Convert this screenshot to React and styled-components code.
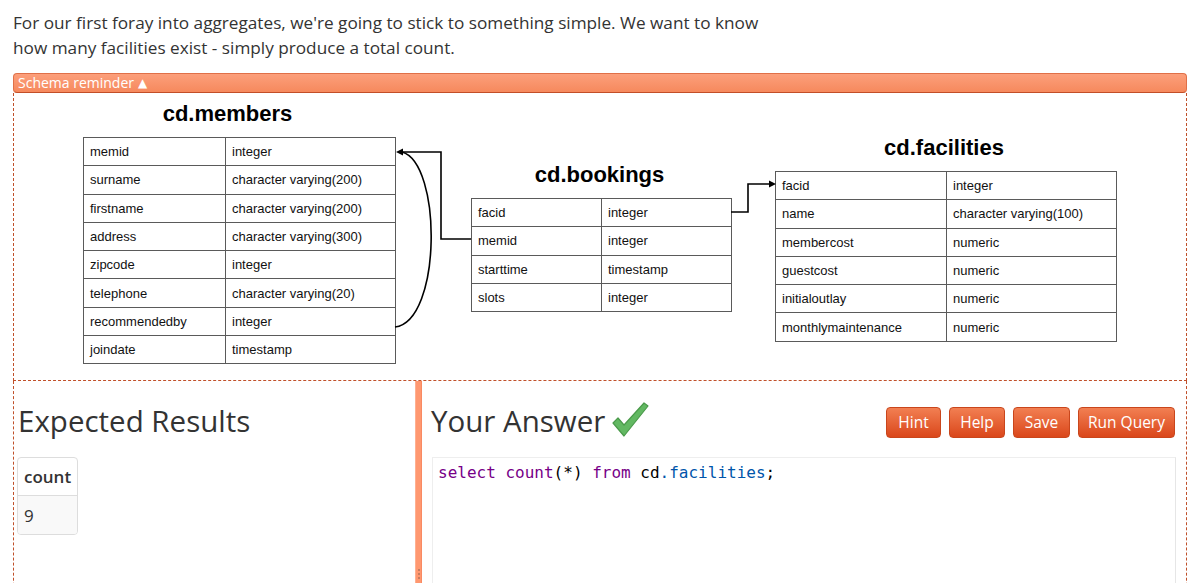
import React from "react";
import styled, { createGlobalStyle } from "styled-components";

const Global = createGlobalStyle`
  html, body { margin: 0; padding: 0; background: #fff; }
  body { font-family: "Open Sans", "Noto Sans", sans-serif; color: #333; }
  * { box-sizing: border-box; }
`;

const Page = styled.div`
  padding: 10px 10px 0 13px;
  width: 1197px;
`;

const Intro = styled.p`
  margin: 0 0 13px 0;
  font-size: 17.2px;
  line-height: 25px;
  color: #333;
`;

const ReminderBar = styled.div`
  width: 1174px;
  height: 20px;
  background: linear-gradient(#fc9f7b, #f6895d);
  border: 1px solid #e07048;
  border-bottom-color: #c24e28;
  border-radius: 4px;
  color: #fff;
  font-size: 14px;
  line-height: 17px;
  padding-left: 4px;
`;

const Caret = styled.span`
  font-size: 12px;
  margin-left: 4px;
  vertical-align: 1px;
  font-family: "DejaVu Sans", sans-serif;
`;

const SchemaBox = styled.div`
  width: 1174px;
  height: 288px;
  border-left: 1px dashed #c0502a;
  border-right: 1px dashed #c0502a;
  border-bottom: 1px dashed #c0502a;
`;

const Diagram = styled.div`
  position: relative;
  display: flex;
  align-items: flex-start;
  padding-left: 69px;
  height: 100%;
  font-family: "Liberation Sans", Arial, sans-serif;
`;

const Column = styled.div`
  display: flex;
  flex-direction: column;
  margin-top: ${(p) => p.$top}px;
  margin-right: ${(p) => p.$gap || 0}px;
  width: ${(p) => p.$width}px;
`;

const TableTitle = styled.div`
  height: 28px;
  line-height: 28px;
  margin-bottom: 11px;
  font-size: 22px;
  font-weight: bold;
  color: #000;
  text-align: center;
  padding-right: ${(p) => p.$shift || 0}px;
  transform: translateY(2px);
`;

const SchemaTable = styled.table`
  border-collapse: collapse;
  width: 100%;
  table-layout: fixed;
  font-size: 13px;
  color: #111;
`;

const Cell = styled.td`
  border: 1px solid #5a5a5a;
  height: 28.3px;
  padding: 0 0 0 6px;
  vertical-align: middle;
  width: ${(p) => (p.$w ? p.$w + "px" : "auto")};
`;

const Arrows = styled.svg`
  position: absolute;
  left: 0;
  top: 0;
  pointer-events: none;
`;

const Lower = styled.div`
  display: flex;
  width: 1174px;
  height: 230px;
  border-left: 1px dashed #c0502a;
  border-right: 1px dashed #c0502a;
`;

const LeftPane = styled.div`
  width: 401px;
  padding: 0 0 0 4px;
`;

const Splitter = styled.div`
  position: relative;
  width: 7px;
  background: #ff9870;
  border-left: 1px solid #ffb090;
  border-right: 1px solid #f98a62;
`;

const Grip = styled.div`
  position: absolute;
  left: 2px;
  top: 188px;
  width: 2px;
  height: 12px;
  background: repeating-linear-gradient(#c77c60 0 2px, transparent 2px 4px);
`;

const RightPane = styled.div`
  flex: 1;
  padding: 0 10px 0 9px;
`;

const PaneHead = styled.div`
  display: flex;
  align-items: center;
  height: 76px;
  padding-top: 2px;
`;

const Heading = styled.h2`
  margin: 0;
  font-size: 29.5px;
  font-weight: 400;
  color: #333;
  display: flex;
  align-items: center;
  gap: 6px;
`;

const Buttons = styled.div`
  margin-left: auto;
  display: flex;
  gap: 8px;
  padding-right: 1px;
  padding-top: 4px;
`;

const Button = styled.button`
  height: 31px;
  width: ${(p) => p.$w}px;
  padding: 0;
  border: 1px solid #c9461c;
  border-radius: 4px;
  background: linear-gradient(#f27f52, #da471b);
  color: #fff;
  font-family: "Open Sans", "Noto Sans", sans-serif;
  font-size: 15.5px;
`;

const ResultTable = styled.table`
  border-collapse: separate;
  border-spacing: 0;
  border: 1px solid #ddd;
  border-radius: 4px;
  overflow: hidden;
  font-size: 17px;
  margin-left: -1px;
`;

const RTh = styled.th`
  text-align: left;
  font-weight: 600;
  height: 38px;
  padding: 0 6px;
  border-bottom: 1px solid #ddd;
`;

const RTd = styled.td`
  height: 38px;
  padding: 0 6px;
  background: #f9f9f9;
`;

const Editor = styled.div`
  border: 1px solid #eee;
  border-right-color: #e6e6e6;
  height: 140px;
  margin-left: 1px;
  padding: 4px 5px;
  font-family: "DejaVu Sans Mono", "Liberation Mono", monospace;
  font-size: 16px;
  line-height: 22px;
  color: #000;
`;

const Tok = styled.span`
  color: ${(p) => (p.$kind === "kw" ? "#770088" : p.$kind === "var" ? "#0055aa" : "#000")};
`;

const members = [
  ["memid", "integer"],
  ["surname", "character varying(200)"],
  ["firstname", "character varying(200)"],
  ["address", "character varying(300)"],
  ["zipcode", "integer"],
  ["telephone", "character varying(20)"],
  ["recommendedby", "integer"],
  ["joindate", "timestamp"],
];
const bookings = [
  ["facid", "integer"],
  ["memid", "integer"],
  ["starttime", "timestamp"],
  ["slots", "integer"],
];
const facilities = [
  ["facid", "integer"],
  ["name", "character varying(100)"],
  ["membercost", "numeric"],
  ["guestcost", "numeric"],
  ["initialoutlay", "numeric"],
  ["monthlymaintenance", "numeric"],
];

function SchemaTableView({ title, rows, first, width, top, gap, shift }) {
  return (
    <Column $top={top} $gap={gap} $width={width}>
      <TableTitle $shift={shift}>{title}</TableTitle>
      <SchemaTable>
        <tbody>
          {rows.map(([a, b]) => (
            <tr key={a}>
              <Cell $w={first}>{a}</Cell>
              <Cell>{b}</Cell>
            </tr>
          ))}
        </tbody>
      </SchemaTable>
    </Column>
  );
}

function CheckMark() {
  return (
    <svg width="38" height="36" viewBox="0 0 38 36">
      <path
        d="M2 21 L7 16 L13 23 L33 1 L37 4 L13 34 Z"
        fill="#62b862"
        stroke="#4a9a4a"
        strokeWidth="1.2"
        strokeLinejoin="round"
      />
    </svg>
  );
}

export default function App() {
  return (
    <Page>
      <Global />
      <Intro>
        For our first foray into aggregates, we're going to stick to something simple. We want to know
        <br />
        how many facilities exist - simply produce a total count.
      </Intro>
      <ReminderBar>
        Schema reminder<Caret>▲</Caret>
      </ReminderBar>
      <SchemaBox>
        <Diagram>
          <SchemaTableView title="cd.members" rows={members} first={142} width={313} top={5} gap={75} shift={24} />
          <SchemaTableView title="cd.bookings" rows={bookings} first={130} width={261} top={66} gap={43} shift={4} />
          <SchemaTableView title="cd.facilities" rows={facilities} first={171} width={342} top={39} shift={4} />
          <Arrows width="1172" height="288" viewBox="0 0 1172 288">
            <g fill="none" stroke="#000" strokeWidth="1.6">
              <path d="M457 146 H427 V59 H388" />
              <path d="M381 234 C 428 228, 428 70, 388 59" />
              <path d="M717 119 H734 V91 H756" />
            </g>
            <polygon points="382,59 389,55.5 389,62.5" fill="#000" />
            <polygon points="762,91 755,87.5 755,94.5" fill="#000" />
          </Arrows>
        </Diagram>
      </SchemaBox>
      <Lower>
        <LeftPane>
          <PaneHead>
            <Heading>Expected Results</Heading>
          </PaneHead>
          <ResultTable>
            <thead>
              <tr>
                <RTh>count</RTh>
              </tr>
            </thead>
            <tbody>
              <tr>
                <RTd>9</RTd>
              </tr>
            </tbody>
          </ResultTable>
        </LeftPane>
        <Splitter>
          <Grip />
        </Splitter>
        <RightPane>
          <PaneHead>
            <Heading>
              Your Answer
              <CheckMark />
            </Heading>
            <Buttons>
              <Button $w={55}>Hint</Button>
              <Button $w={56}>Help</Button>
              <Button $w={57}>Save</Button>
              <Button $w={97}>Run Query</Button>
            </Buttons>
          </PaneHead>
          <Editor>
            <Tok $kind="kw">select</Tok> <Tok $kind="kw">count</Tok>(*) <Tok $kind="kw">from</Tok> cd
            <Tok $kind="var">.facilities</Tok>;
          </Editor>
        </RightPane>
      </Lower>
    </Page>
  );
}
